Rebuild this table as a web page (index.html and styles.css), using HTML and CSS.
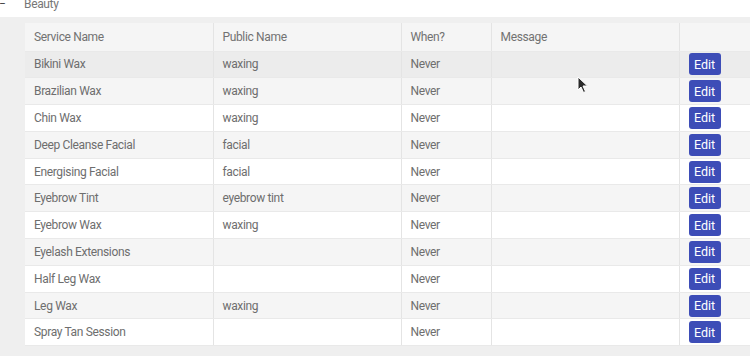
FILE: index.html
```html
<!DOCTYPE html>
<html lang="en">

<head>
    <meta charset="UTF-8" />
    <meta name="viewport" content="width=device-width, initial-scale=1.0" />
    <link rel="stylesheet" href="styles.css">
    <title>Services</title>
</head>

<body>

    <!-- category header -->
    <div class="category">
        <span class="toggle">&minus;</span>
        <span class="category-name">Beauty</span>
    </div>

    <div class="panel">
        <table class="services">
            <thead>
                <tr>
                    <th class="col-name">Service Name</th>
                    <th class="col-public">Public Name</th>
                    <th class="col-when">When?</th>
                    <th class="col-msg">Message</th>
                    <th class="col-action"></th>
                </tr>
            </thead>
            <tbody>
                <tr class="hover">
                    <td>Bikini Wax</td><td>waxing</td><td>Never</td><td></td>
                    <td><button class="btn">Edit</button></td>
                </tr>
                <tr>
                    <td>Brazilian Wax</td><td>waxing</td><td>Never</td><td></td>
                    <td><button class="btn">Edit</button></td>
                </tr>
                <tr>
                    <td>Chin Wax</td><td>waxing</td><td>Never</td><td></td>
                    <td><button class="btn">Edit</button></td>
                </tr>
                <tr>
                    <td>Deep Cleanse Facial</td><td>facial</td><td>Never</td><td></td>
                    <td><button class="btn">Edit</button></td>
                </tr>
                <tr>
                    <td>Energising Facial</td><td>facial</td><td>Never</td><td></td>
                    <td><button class="btn">Edit</button></td>
                </tr>
                <tr>
                    <td>Eyebrow Tint</td><td>eyebrow tint</td><td>Never</td><td></td>
                    <td><button class="btn">Edit</button></td>
                </tr>
                <tr>
                    <td>Eyebrow Wax</td><td>waxing</td><td>Never</td><td></td>
                    <td><button class="btn">Edit</button></td>
                </tr>
                <tr>
                    <td>Eyelash Extensions</td><td></td><td>Never</td><td></td>
                    <td><button class="btn">Edit</button></td>
                </tr>
                <tr>
                    <td>Half Leg Wax</td><td></td><td>Never</td><td></td>
                    <td><button class="btn">Edit</button></td>
                </tr>
                <tr>
                    <td>Leg Wax</td><td>waxing</td><td>Never</td><td></td>
                    <td><button class="btn">Edit</button></td>
                </tr>
                <tr>
                    <td>Spray Tan Session</td><td></td><td>Never</td><td></td>
                    <td><button class="btn">Edit</button></td>
                </tr>
            </tbody>
        </table>
    </div>

    <!-- mouse pointer captured in the screenshot -->
    <svg class="cursor" width="12" height="18" viewBox="0 0 12 18">
        <path d="M1 1 L1 14 L4 11 L6.5 16.5 L8.5 15.5 L6 10 L10.5 10 Z" fill="#2b2b2b" stroke="#fff" stroke-width="1"/>
    </svg>

</body>

</html>
```

FILE: styles.css
```css
* {
    box-sizing: border-box;
}

body {
    margin: 0;
    background-color: #efefef;
    font-family: 'Roboto', 'Noto Sans', sans-serif;
    font-size: 12px;
    letter-spacing: -0.35px;
    color: #6e6e6e;
    overflow: hidden;
    width: 750px;
    height: 356px;
    position: relative;
}

.category {
    background-color: #fff;
    height: 17px;
    display: flex;
    align-items: flex-start;
    line-height: 8px;
    overflow: hidden;
}

.toggle {
    width: 25px;
    color: #444;
    margin-left: -1px;
}

.category-name {
    color: #777;
}

.panel {
    padding: 6px 0 0 25px;
}

.services {
    border-collapse: collapse;
    background-color: #fff;
    width: 760px;
    table-layout: fixed;
}

.services th,
.services td {
    text-align: left;
    font-weight: 400;
    padding: 0 9px;
    border-right: 1px solid #e4e4e4;
    border-bottom: 1px solid #e9e9e9;
}

.services th {
    background-color: #f5f5f5;
    height: 28px;
    color: #727272;
}

.services td {
    height: 26.8px;
}

.col-name { width: 188px; }
.col-public { width: 188px; }
.col-when { width: 90px; }
.col-msg { width: 188px; }

.services tbody tr:nth-child(even) {
    background-color: #f5f5f5;
}

.services tbody tr.hover {
    background-color: #ececec;
}

.btn {
    background-color: #3d4db7;
    color: #fff;
    border: 0;
    border-radius: 3px;
    font-family: inherit;
    font-size: 12.5px;
    letter-spacing: 0;
    height: 22px;
    width: 32px;
    padding: 0;
    cursor: pointer;
}

.cursor {
    position: absolute;
    left: 577px;
    top: 76px;
}
```
